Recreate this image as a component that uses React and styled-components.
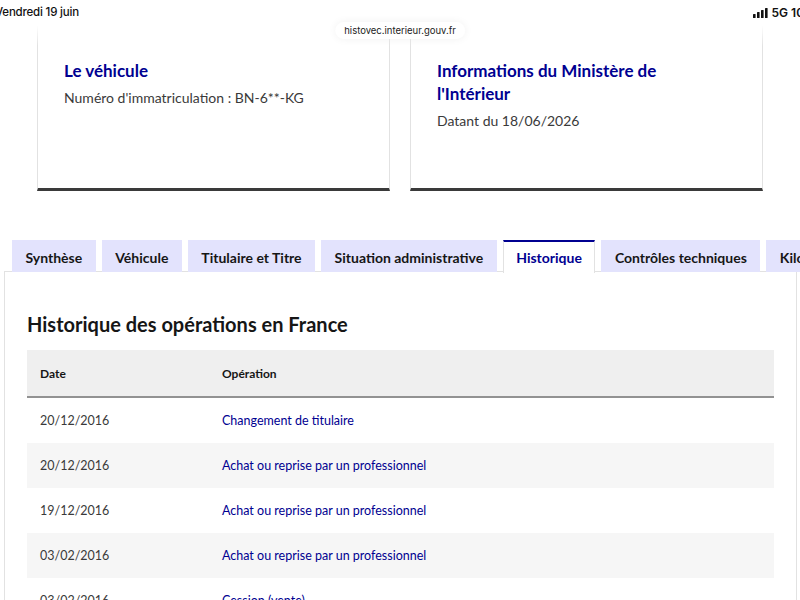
import React from 'react'
import styled, { createGlobalStyle } from 'styled-components'

const GlobalStyle = createGlobalStyle`
  html, body {
    margin: 0;
    padding: 0;
    background: #fff;
    overflow: hidden;
  }
  body {
    font-family: Lato, "Open Sans", sans-serif;
    color: #161616;
  }
`

const Page = styled.div`
  width: 800px;
  height: 600px;
  overflow: hidden;
  position: relative;
`

// Safari status bar, lies over the scrolled page
const StatusBar = styled.div`
  position: absolute;
  top: 0;
  left: 0;
  right: 0;
  height: 46px;
  background: linear-gradient(#fff 0, #fff 55%, rgba(255, 255, 255, 0) 100%);
  z-index: 2;
  font-family: Inter, Roboto, sans-serif;
  .time {
    position: absolute;
    left: -5px;
    top: 5px;
    font-size: 11.5px;
    font-weight: 500;
    letter-spacing: -0.2px;
    color: #111;
  }
  .right {
    position: absolute;
    right: -12px;
    top: 5px;
    display: flex;
    align-items: center;
    gap: 4px;
    font-size: 12px;
    font-weight: 600;
    color: #111;
  }
`

const UrlPill = styled.div`
  position: absolute;
  left: 50%;
  top: 22px;
  transform: translateX(-50%);
  padding: 3px 9px;
  border-radius: 10px;
  background: #fff;
  box-shadow: 0 0 8px rgba(0, 0, 0, 0.06);
  font-size: 9.5px;
  color: #222;
  white-space: nowrap;
`

const Cards = styled.div`
  display: grid;
  grid-template-columns: 1fr 1fr;
  gap: 20px;
  padding: 0 37px;
  margin-top: 22px;
`

const Card = styled.div`
  height: 169px;
  box-sizing: border-box;
  padding: 36px 26px 0;
  border: 1px solid #e2e2e2;
  border-bottom: 3px solid #3a3a3a;
  background: #fff;
`

const CardTitle = styled.h3`
  margin: 0 0 4px;
  max-width: 250px;
  font-size: 17px;
  line-height: 23px;
  font-weight: 700;
  color: #000091;
`

const CardText = styled.p`
  margin: 0;
  font-size: 14px;
  line-height: 24px;
  color: #3a3a3a;
`

const TabList = styled.div`
  display: flex;
  gap: 6px;
  margin-top: 49px;
  padding-left: 12px;
  white-space: nowrap;
  position: relative;
  z-index: 1;
`

const Tab = styled.div`
  flex: none;
  box-sizing: border-box;
  padding: 0 12.5px;
  display: flex;
  align-items: center;
  font-size: 14px;
  font-weight: 700;
  background: ${p => (p.active ? '#fff' : '#e3e3fd')};
  color: ${p => (p.active ? '#000091' : '#161616')};
  border-top: 2px solid ${p => (p.active ? '#000091' : 'transparent')};
  border-left: 1px solid ${p => (p.active ? '#e2e2e2' : 'transparent')};
  border-right: 1px solid ${p => (p.active ? '#e2e2e2' : 'transparent')};
  margin-bottom: ${p => (p.active ? '-1px' : '0')};
  height: ${p => (p.active ? '33px' : '32px')};
`

const Panel = styled.div`
  margin: -1px 3px 0 4px;
  border: 1px solid #e2e2e2;
  padding: 38px 22px 0;
  height: 400px;
`

const Heading = styled.h2`
  margin: 0 0 12px;
  font-size: 20px;
  line-height: 28px;
  font-weight: 700;
  color: #161616;
`

const Table = styled.div`
  display: flex;
  flex-direction: column;
`

const Row = styled.div`
  display: grid;
  grid-template-columns: 182px 1fr;
  align-items: center;
  height: ${p => (p.head ? '46px' : '45px')};
  padding-left: 13px;
  font-size: ${p => (p.head ? '12px' : '12.5px')};
  background: ${p => (p.head ? '#efefef' : p.shaded ? '#f6f6f6' : '#fff')};
  border-bottom: ${p => (p.head ? '2px solid #929292' : 'none')};
  font-weight: ${p => (p.head ? 700 : 400)};
  color: ${p => (p.head ? '#161616' : '#3a3a3a')};
`

const OpLink = styled.span`
  color: #000091;
`

const Signal = () => (
  <svg width='15' height='10' viewBox='0 0 15 10'>
    <rect x='0' y='6' width='2.6' height='4' rx='0.6' fill='#111' />
    <rect x='4' y='4' width='2.6' height='6' rx='0.6' fill='#111' />
    <rect x='8' y='2' width='2.6' height='8' rx='0.6' fill='#111' />
    <rect x='12' y='0' width='2.6' height='10' rx='0.6' fill='#111' />
  </svg>
)

const tabs = [
  'Synthèse',
  'Véhicule',
  'Titulaire et Titre',
  'Situation administrative',
  'Historique',
  'Contrôles techniques',
  'Kilométrage'
]

const rows = [
  ['20/12/2016', 'Changement de titulaire'],
  ['20/12/2016', 'Achat ou reprise par un professionnel'],
  ['19/12/2016', 'Achat ou reprise par un professionnel'],
  ['03/02/2016', 'Achat ou reprise par un professionnel'],
  ['03/02/2016', 'Cession (vente)']
]

const App = () => {
  return (
    <Page>
      <GlobalStyle />
      <StatusBar>
        <span className='time'>Vendredi 19 juin</span>
        <span className='right'>
          <Signal />
          5G 100
        </span>
        <UrlPill>histovec.interieur.gouv.fr</UrlPill>
      </StatusBar>

      <Cards>
        <Card>
          <CardTitle>Le véhicule</CardTitle>
          <CardText>Numéro d'immatriculation : BN-6**-KG</CardText>
        </Card>
        <Card>
          <CardTitle>Informations du Ministère de l'Intérieur</CardTitle>
          <CardText>Datant du 18/06/2026</CardText>
        </Card>
      </Cards>

      <TabList>
        {tabs.map(t => (
          <Tab key={t} active={t === 'Historique'}>
            {t}
          </Tab>
        ))}
      </TabList>
      <Panel>
        <Heading>Historique des opérations en France</Heading>
        <Table>
          <Row head>
            <span>Date</span>
            <span>Opération</span>
          </Row>
          {rows.map((r, i) => (
            <Row key={i} shaded={i % 2 === 1}>
              <span>{r[0]}</span>
              <OpLink>{r[1]}</OpLink>
            </Row>
          ))}
        </Table>
      </Panel>
    </Page>
  )
}

export default App
